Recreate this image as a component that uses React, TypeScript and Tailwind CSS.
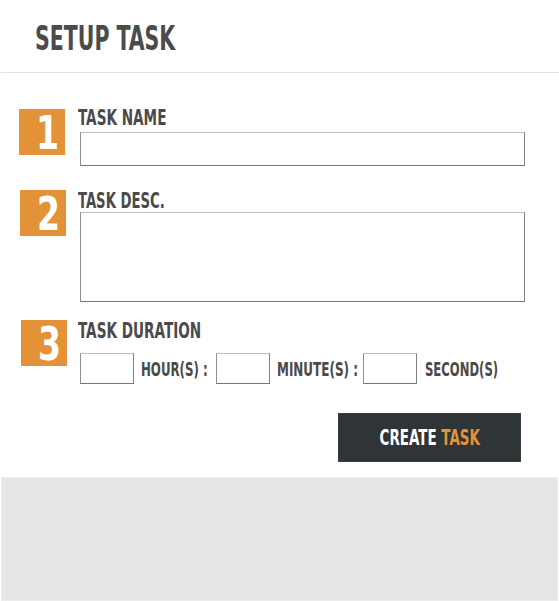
import React from "react";

const font = "font-['DejaVu_Sans_Condensed','DejaVu_Sans',sans-serif]";

function Narrow({ children, className = "scale-x-[0.72]" }: { children: React.ReactNode; className?: string }) {
  return <span className={`inline-block whitespace-nowrap origin-left ${className}`}>{children}</span>;
}

function NumBox({ n }: { n: string }) {
  return (
    <div className="w-[46px] h-[46px] bg-[#e39237] flex items-center justify-center shrink-0">
      <span className="inline-block text-white font-bold text-[46px] leading-none ml-[10px] pt-[2px] scale-x-[0.8]">
        {n}
      </span>
    </div>
  );
}

const inputCls =
  "block bg-white border border-t-[#c0c0c0] border-l-[#909090] border-r-[#808080] border-b-[#767676] outline-none";

export default function App() {
  return (
    <div className={`w-[559px] h-[601px] bg-white flex flex-col text-[#4a4a4a] ${font}`}>
      <header className="h-[73px] shrink-0 border-b border-[#e2e2e2] pl-[34px] pt-[20px] ml-[1px]">
        <h1 className="font-bold text-[34px] leading-[36px] text-[#4b4b4b]">
          <Narrow className="scale-x-[0.67]">SETUP TASK</Narrow>
        </h1>
      </header>

      <div className="flex-1 flex flex-col">
        <div className="flex mt-[36px] pl-[19px]">
          <NumBox n="1" />
          <div className="ml-[13px] flex flex-col">
            <label className="block font-bold text-[21px] leading-[22px] mt-[-2px]">
              <Narrow>TASK NAME</Narrow>
            </label>
            <input className={`${inputCls} w-[445px] h-[34px] ml-[2px] mt-[3px]`} />
          </div>
        </div>

        <div className="flex mt-[24px] pl-[20px]">
          <NumBox n="2" />
          <div className="ml-[12px] flex flex-col">
            <label className="block font-bold text-[21px] leading-[22px] mt-[0px]">
              <Narrow className="scale-x-[0.7]">TASK DESC.</Narrow>
            </label>
            <textarea className={`${inputCls} w-[445px] h-[90px] ml-[2px] mt-[0px] resize-none`} />
          </div>
        </div>

        <div className="flex mt-[18px] pl-[21px]">
          <NumBox n="3" />
          <div className="ml-[11px] flex flex-col">
            <label className="block font-bold text-[21px] leading-[22px] mt-[0px]">
              <Narrow>TASK DURATION</Narrow>
            </label>
            <div className="flex items-center mt-[11px] ml-[2px] font-bold text-[19px] leading-[22px]">
              <input className={`${inputCls} w-[54px] h-[31px]`} />
              <span className="w-[82px] pl-[7px]">
                <Narrow className="scale-x-[0.69]">HOUR(S) :</Narrow>
              </span>
              <input className={`${inputCls} w-[54px] h-[31px]`} />
              <span className="w-[93px] pl-[7px]">
                <Narrow className="scale-x-[0.7]">MINUTE(S) :</Narrow>
              </span>
              <input className={`${inputCls} w-[54px] h-[31px]`} />
              <span className="pl-[8px]">
                <Narrow className="scale-x-[0.68]">SECOND(S)</Narrow>
              </span>
            </div>
          </div>
        </div>

        <div className="flex justify-end pr-[38px] mt-[29px]">
          <button className="w-[183px] h-[49px] bg-[#2f3437] border border-[#3a3f42] font-bold text-[22px] text-white flex items-center justify-center">
            <span className="inline-block whitespace-nowrap scale-x-[0.68]">
              CREATE <span className="text-[#e39237]">TASK</span>
            </span>
          </button>
        </div>
      </div>

      <div className="h-[124px] shrink-0 bg-[#e5e5e5] border border-[#ededed] mx-[1px]" />
    </div>
  );
}
